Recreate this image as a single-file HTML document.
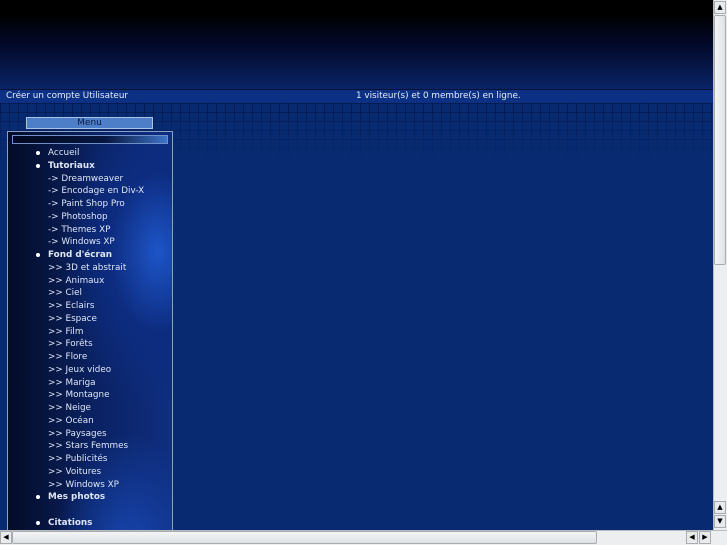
<!DOCTYPE html>
<html><head><meta charset="utf-8"><style>
*{margin:0;padding:0;box-sizing:border-box}
body{width:727px;height:545px;overflow:hidden;position:relative;background:#082a70;font-family:"DejaVu Sans","Liberation Sans",sans-serif;font-size:8.8px;color:#dfe6f5}
#hdr{position:absolute;left:0;top:0;width:713px;height:89px;background:linear-gradient(#000 0,#000 14px,#02092a 45px,#0a2466 89px)}
#line{position:absolute;left:0;top:89px;width:713px;height:1px;background:#02103a}
#band{position:absolute;left:0;top:90px;width:713px;height:13px;background:#0c3184}
#grid{position:absolute;left:0;top:103px;width:713px;height:60px;
background-image:linear-gradient(90deg,rgba(0,10,50,.45) 1px,transparent 1px),linear-gradient(rgba(0,10,50,.45) 1px,transparent 1px);background-size:9px 9px;
-webkit-mask-image:linear-gradient(#000,transparent);mask-image:linear-gradient(#000,transparent)}
.t{position:absolute;top:91px;color:#e6ecf8}
#tab{position:absolute;left:26px;top:117px;width:127px;height:12px;background:#4d7fc8;border:1px solid #a9c2e6;color:#0a1a40;text-align:center;line-height:10px;font-size:9px}
#side{position:absolute;left:7px;top:131px;width:166px;height:400px;border:1px solid #8aa0c8;
background:radial-gradient(ellipse 120px 200px at 150px 120px,#1d55c8 0,#0d2c80 40%,transparent 80%),radial-gradient(ellipse 100px 160px at 120px 420px,#1746b0 0,transparent 75%),linear-gradient(90deg,#030b26,#0a2160 50%,#0f2e80)}
#bar{position:absolute;left:4px;top:3px;width:156px;height:9px;background:linear-gradient(90deg,#02081e,#061640 60%,#3f74c8);border:1px solid #6f8fc8}
ul{position:absolute;left:0;top:15px;list-style:none;line-height:12.75px}
li{padding-left:40px;position:relative}
li.b{font-weight:bold}
li.b:before{content:"";position:absolute;left:28px;top:4px;width:4px;height:4px;border-radius:50%;background:#fff}
#vs{position:absolute;left:713px;top:0;width:14px;height:530px;background:#eceeef;border-left:1px solid #b8bcc0}
#vth{position:absolute;left:714px;top:15px;width:12px;height:250px;background:linear-gradient(90deg,#f4f5f6,#dfe2e5);border:1px solid #a8acb0;border-radius:2px}
#hs{position:absolute;left:0;top:530px;width:727px;height:15px;background:#eceeef;border-top:1px solid #b8bcc0}
#hth{position:absolute;left:12px;top:531px;width:585px;height:13px;background:linear-gradient(#f4f5f6,#dde0e3);border:1px solid #a8acb0;border-radius:2px}
.ar{position:absolute;width:12px;height:13px;background:#e8eaec;border:1px solid #a8acb0;font-size:7px;color:#000;text-align:center;line-height:11px}
</style></head><body>
<div id="hdr"></div><div id="line"></div><div id="band"></div><div id="grid"></div>
<div class="t" style="left:6px">Créer un compte Utilisateur</div>
<div class="t" style="left:356px">1 visiteur(s) et 0 membre(s) en ligne.</div>
<div id="tab">Menu</div>
<div id="side"><div id="bar"></div>
<ul>
<li class="b" style="font-weight:normal">Accueil</li>
<li class="b">Tutoriaux</li>
<li>-&gt; Dreamweaver</li><li>-&gt; Encodage en Div-X</li><li>-&gt; Paint Shop Pro</li><li>-&gt; Photoshop</li><li>-&gt; Themes XP</li><li>-&gt; Windows XP</li>
<li class="b">Fond d'écran</li>
<li>&gt;&gt; 3D et abstrait</li><li>&gt;&gt; Animaux</li><li>&gt;&gt; Ciel</li><li>&gt;&gt; Eclairs</li><li>&gt;&gt; Espace</li><li>&gt;&gt; Film</li><li>&gt;&gt; Forêts</li><li>&gt;&gt; Flore</li><li>&gt;&gt; Jeux video</li><li>&gt;&gt; Mariga</li><li>&gt;&gt; Montagne</li><li>&gt;&gt; Neige</li><li>&gt;&gt; Océan</li><li>&gt;&gt; Paysages</li><li>&gt;&gt; Stars Femmes</li><li>&gt;&gt; Publicités</li><li>&gt;&gt; Voitures</li><li>&gt;&gt; Windows XP</li>
<li class="b">Mes photos</li><li>&nbsp;</li>
<li class="b">Citations</li>
</ul></div>
<div id="vs"></div><div id="vth"></div>
<div class="ar" style="left:714px;top:1px">▲</div>
<div class="ar" style="left:714px;top:501px">▲</div>
<div class="ar" style="left:714px;top:515px">▼</div>
<div id="hs"></div><div id="hth"></div>
<div class="ar" style="left:0;top:531px">◀</div>
<div class="ar" style="left:686px;top:531px">◀</div>
<div class="ar" style="left:699px;top:531px">▶</div>
</body></html>
